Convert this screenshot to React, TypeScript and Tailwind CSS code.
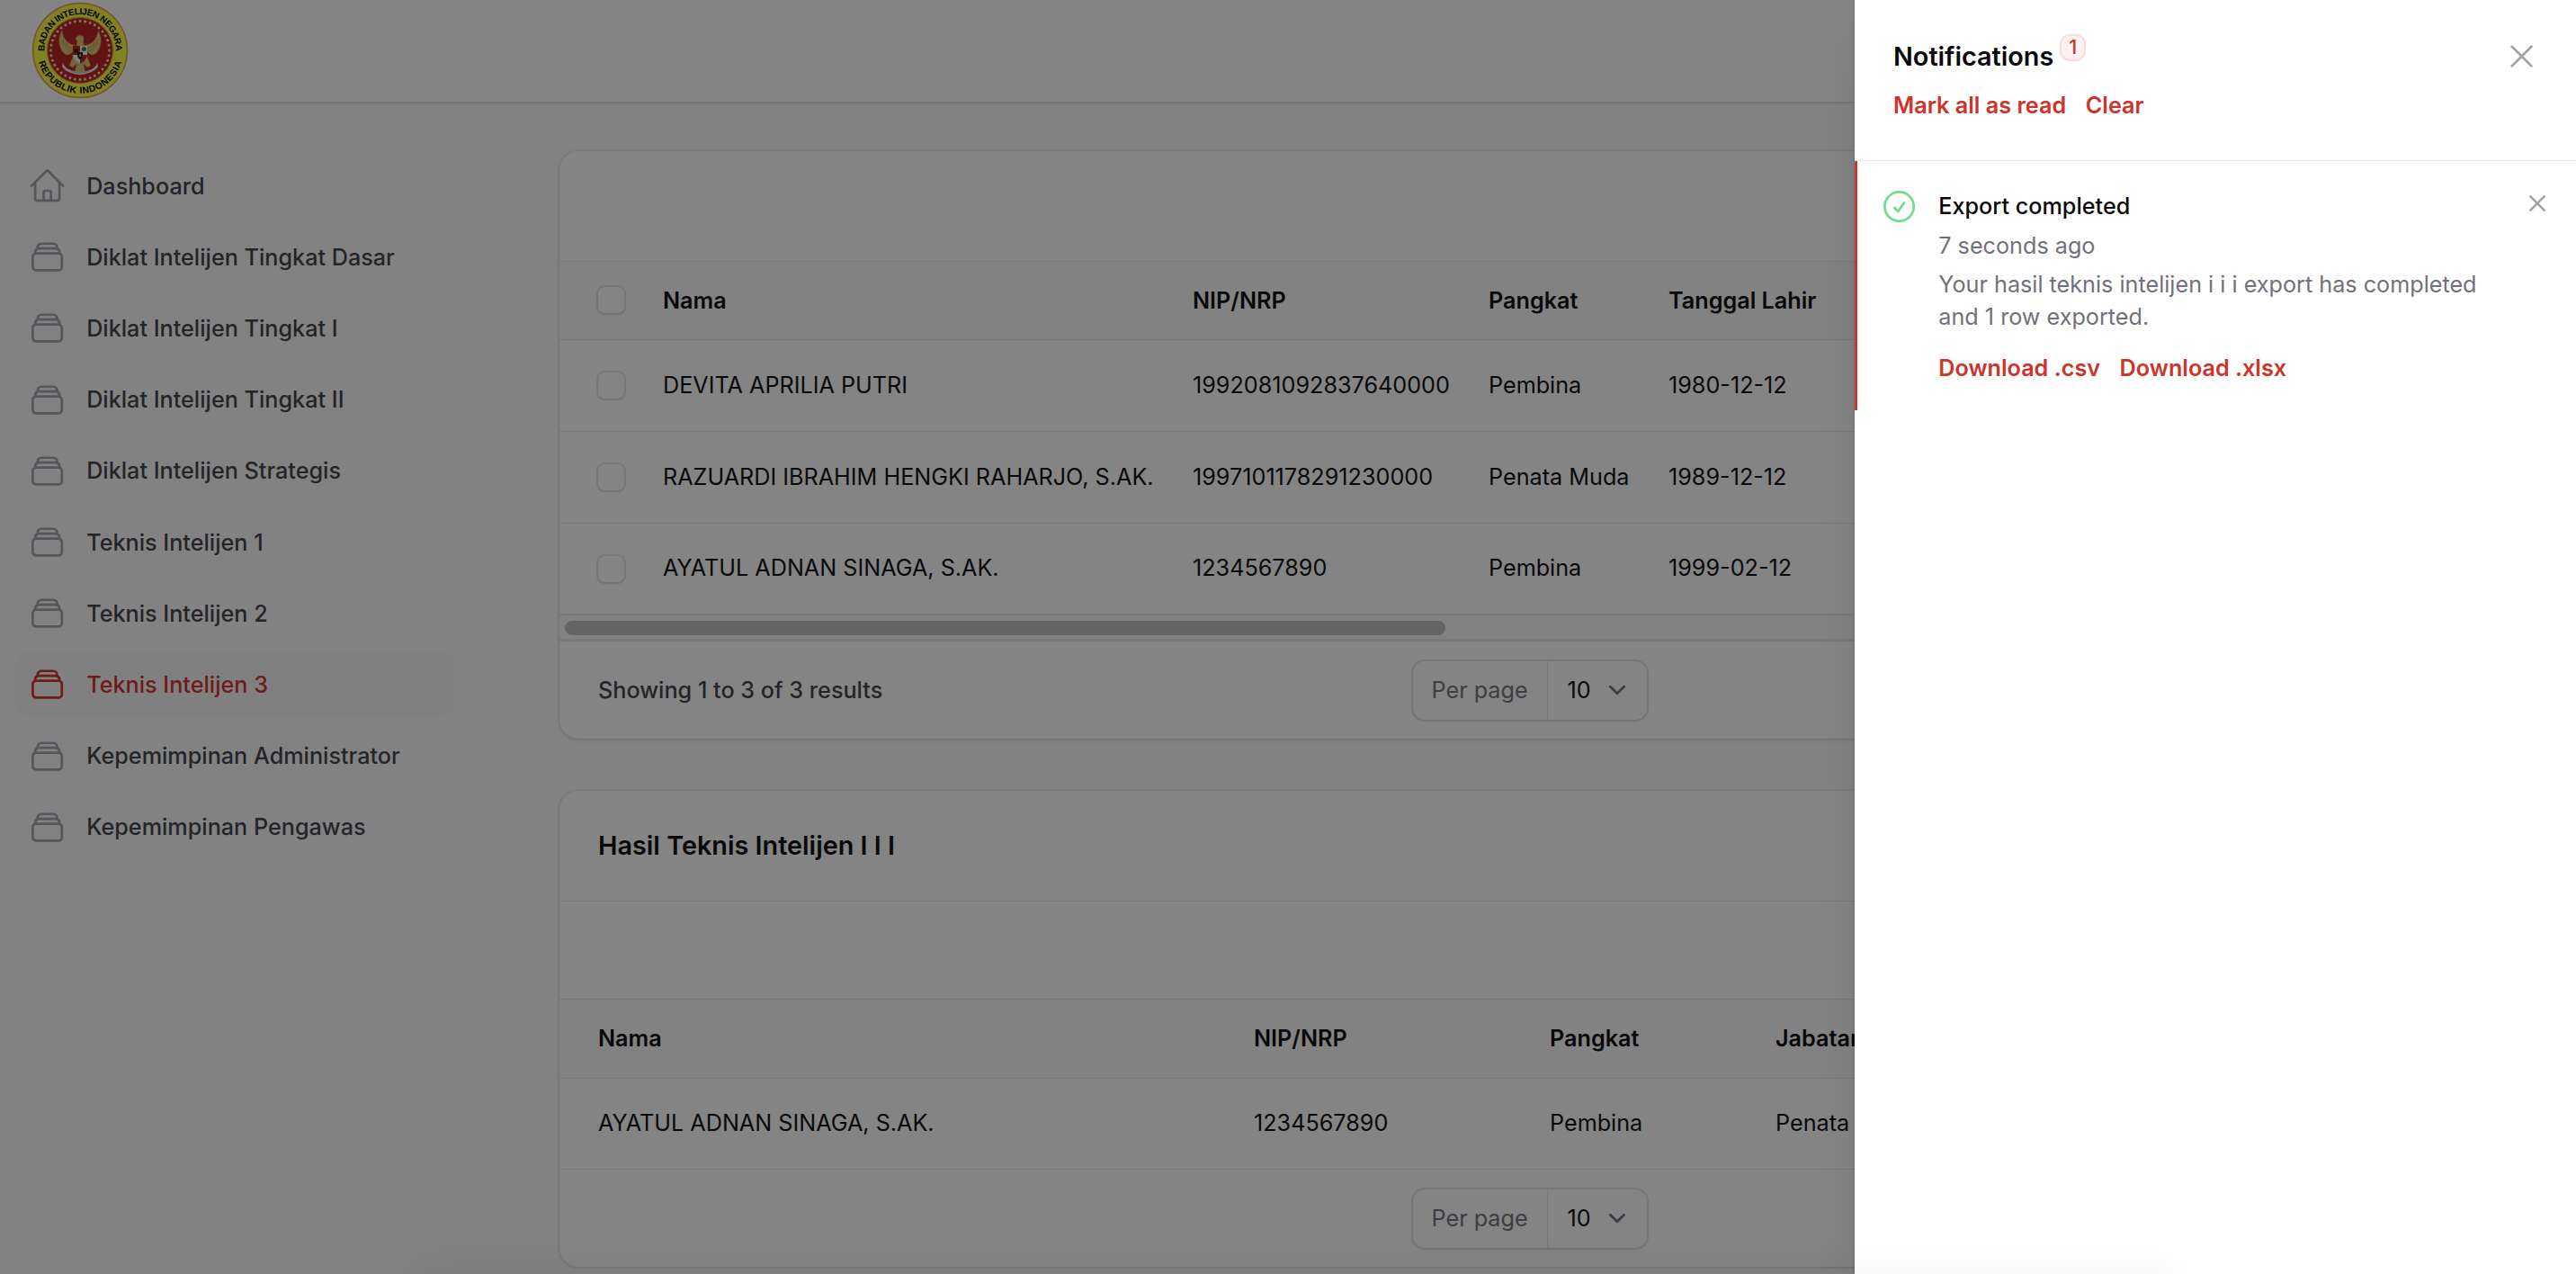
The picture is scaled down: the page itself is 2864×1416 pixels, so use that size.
import {
  HiOutlineCheckCircle,
  HiOutlineHome,
  HiOutlineRectangleStack,
  HiOutlineXMark,
} from "react-icons/hi2";

const navItems = [
  "Dashboard",
  "Diklat Intelijen Tingkat Dasar",
  "Diklat Intelijen Tingkat I",
  "Diklat Intelijen Tingkat II",
  "Diklat Intelijen Strategis",
  "Teknis Intelijen 1",
  "Teknis Intelijen 2",
  "Teknis Intelijen 3",
  "Kepemimpinan Administrator",
  "Kepemimpinan Pengawas",
];

const candidates = [
  ["DEVITA APRILIA PUTRI", "1992081092837640000", "Pembina", "1980-12-12"],
  ["RAZUARDI IBRAHIM HENGKI RAHARJO, S.AK.", "1997101178291230000", "Penata Muda", "1989-12-12"],
  ["AYATUL ADNAN SINAGA, S.AK.", "1234567890", "Pembina", "1999-02-12"],
];

const STAR = "M0-2.3L.6-.75 2.2-.7 .95.3 1.4 1.9 0 1-1.4 1.9-.95.3-2.2-.7-.6-.75Z";

function Seal() {
  const stars = Array.from({ length: 36 }, (_, i) => i * 10);
  return (
    <svg viewBox="-54 -54 108 108" className="h-[108px] w-[108px]">
      <defs>
        <path id="seal-top" d="M-39.6 2.5A39.7 39.7 0 1 1 39.6 2.5" />
        <path id="seal-bottom" d="M-46.8 10.5A48 48 0 0 0 46.8 10.5" />
      </defs>
      <circle r="52.4" fill="#fbf83c" stroke="#e6a544" strokeWidth="1.8" />
      <circle r="36.6" fill="#b91a17" stroke="#d9a637" strokeWidth="1.2" />
      {stars.map((a) => (
        <path key={a} d={STAR} fill="#f3e9ea" transform={`rotate(${a}) translate(0 -32.6)`} />
      ))}
      <g fill="#dcbf6f" stroke="#9d7f35" strokeWidth=".5">
        <path d="M-6-2C-9 4-14 8-19 2-24-4-25-15-20-22-19-14-15-9-10-7L-6-6Z" />
        <path d="M6-2C9 4 14 8 19 2 24-4 25-15 20-22 19-14 15-9 10-7L6-6Z" />
        <path d="M-4-6C-3-9-3-11-5-13-4-17 1-18 4-15L4-11C3-9 4-8 5-6L8-2 8 8-8 8-8-2Z" />
        <path d="M-8 7L-12 17-8 19-4 15-6 25 0 27 6 25 4 15 8 19 12 17 8 7Z" />
      </g>
      <path d="M-19-12Q-18-2-10 1M-16-9Q-14-3-8-1M19-12Q18-2 10 1M16-9Q14-3 8-1" fill="none" stroke="#a98b42" strokeWidth=".8" />
      <path d="M-19 14Q-17 20-10 22 0 26 10 22 17 20 19 14L20 18Q17 23 10 25 0 29-10 25-17 23-20 18Z" fill="#eee8ec" />
      <path d="M-10 23Q0 27 10 23" fill="none" stroke="#555" strokeWidth=".7" strokeDasharray="1 .8" />
      <path d="M-8-5H0V5H-8Z" fill="#c4161c" />
      <path d="M0-5H8V5H0Z" fill="#f2f2ee" />
      <path d="M-8 5H0V15Q-7 12-8 5Z" fill="#f2f2ee" />
      <path d="M0 5H8Q7 12 0 15Z" fill="#c4161c" />
      <circle cx="4.4" cy="-1.6" r="2.5" fill="#1c7c3a" />
      <path d="M-6-2l3 1 1 3-3 1-2-2Z" fill="#111" />
      <path d="M-3 2H3V6Q2 9 0 10-2 9-3 6Z" fill="#111" />
      <circle cy="5.6" r="1.3" fill="#e5c33b" />
      <text className="text-[10px] font-bold" fontFamily="Liberation Sans, Arial, sans-serif" fill="#000">
        <textPath href="#seal-top" startOffset="50%" textAnchor="middle" textLength="127">
          BADAN INTELIJEN NEGARA
        </textPath>
      </text>
      <text className="text-[10.4px] font-bold" fontFamily="Liberation Sans, Arial, sans-serif" fill="#000">
        <textPath href="#seal-bottom" startOffset="50%" textAnchor="middle" textLength="124">
          REPUBLIK INDONESIA
        </textPath>
      </text>
    </svg>
  );
}

function Checkbox() {
  return (
    <span className="block h-[29px] w-[29px] rounded-[7px] bg-white shadow-[0_0_0_1.8px_rgba(9,9,11,0.1),0_2px_4px_rgba(0,0,0,0.06)]" />
  );
}

function PerPage() {
  return (
    <div className="flex h-[65px] w-[260px] rounded-[13px] bg-white shadow-[0_0_0_2px_rgba(9,9,11,0.1),0_2px_4px_rgba(0,0,0,0.06)]">
      <div className="flex w-[150px] items-center border-r border-gray-200 pl-[21px] text-[#71717a]">Per page</div>
      <div className="flex flex-1 items-center justify-between pl-[22px] pr-[14px]">
        <span>10</span>
        <svg viewBox="0 0 20 20" className="h-[38px] w-[38px]" fill="none" stroke="#6b7280" strokeWidth="1.5" strokeLinecap="round" strokeLinejoin="round">
          <path d="M6 8l4 4 4-4" />
        </svg>
      </div>
    </div>
  );
}

const card =
  "w-[2157px] overflow-hidden rounded-[21px] bg-white shadow-[0_0_0_1.8px_rgba(9,9,11,0.05),0_2px_4px_rgba(0,0,0,0.08)]";
const cols1 = "grid grid-cols-[72px_589px_329px_200px_1fr] items-center pl-[43px]";
const cols2 = "grid grid-cols-[729px_329px_251px_1fr] items-center pl-[43px]";

export default function App() {
  return (
    <div className="relative h-[1416px] w-[2864px] overflow-hidden bg-[#fafafa] font-['Inter',sans-serif] text-[25.2px] leading-[36px] text-[#09090b]">
      <header className="flex h-[113px] items-start bg-white pl-[34.5px] pt-[1.5px] shadow-[0_0_0_1.8px_rgba(9,9,11,0.05),0_2px_4px_rgba(0,0,0,0.06)]">
        <Seal />
      </header>
      <div className="flex">
        <nav className="flex w-[622px] shrink-0 flex-col gap-[7.2px] pl-[17px] pt-[57.7px] font-medium text-[#3f3f46]">
          {navItems.map((label, i) => {
            const Icon = i === 0 ? HiOutlineHome : HiOutlineRectangleStack;
            const active = i === 7;
            return (
              <a
                key={label}
                className={
                  active
                    ? "flex h-[72px] w-[488px] items-center gap-[21.6px] rounded-[14.4px] bg-[#f7f7f7] pl-[14.4px] text-[#d02f28]"
                    : "flex h-[72px] w-[488px] items-center gap-[21.6px] rounded-[14.4px] pl-[14.4px]"
                }
              >
                <Icon className={active ? "h-[43.2px] w-[43.2px]" : "h-[43.2px] w-[43.2px] text-[#a1a1aa]"} />
                <span>{label}</span>
              </a>
            );
          })}
        </nav>

        <main className="flex shrink-0 flex-col gap-[58px] pt-[55px]">
          <section className={card}>
            <div className="h-[123px] border-b border-gray-200" />
            <div className={`${cols1} h-[87px] border-b border-gray-200 bg-[#fafafa] pb-px font-semibold`}>
              <Checkbox />
              <span>Nama</span>
              <span>NIP/NRP</span>
              <span>Pangkat</span>
              <span>Tanggal Lahir</span>
            </div>
            {candidates.map((row) => (
              <div key={row[0]} className={`${cols1} h-[102px] border-b border-gray-200 last-of-type:h-[101px]`}>
                <Checkbox />
                {row.map((cell) => (
                  <span key={cell} className="pb-[2px]">{cell}</span>
                ))}
              </div>
            ))}
            <footer>
              <div className="flex h-[28px] items-center border-y border-[#ededed] bg-[#fafafa] pl-[6px] pt-px">
                <div className="h-[16px] w-[979px] rounded-full bg-[#c1c1c1]" />
              </div>
              <div className="grid h-[110px] grid-cols-[1fr_auto_1fr] items-center border-t-2 border-gray-200 px-[43px]">
                <span className="font-medium text-[#3f3f46]">Showing 1 to 3 of 3 results</span>
                <PerPage />
                <span />
              </div>
            </footer>
          </section>

          <section className={card}>
            <div className="flex h-[123px] items-center border-b border-gray-200 pl-[43px] text-[28.8px] font-semibold">
              Hasil Teknis Intelijen I I I
            </div>
            <div className="h-[109px] border-b border-gray-200" />
            <div className={`${cols2} h-[88px] border-b border-gray-200 bg-[#fafafa] pb-[2px] font-semibold`}>
              <span>Nama</span>
              <span>NIP/NRP</span>
              <span>Pangkat</span>
              <span>Jabatan</span>
            </div>
            <div className={`${cols2} h-[101px] border-b border-gray-200 pb-[2px]`}>
              <span>AYATUL ADNAN SINAGA, S.AK.</span>
              <span>1234567890</span>
              <span>Pembina</span>
              <span>Penata Muda</span>
            </div>
            <div className="flex h-[108px] items-center justify-center">
              <PerPage />
            </div>
          </section>
        </main>
      </div>

      <div className="absolute inset-0 bg-[#09090b]/50" />

      <aside className="absolute inset-y-0 right-0 flex w-[802px] flex-col bg-white shadow-[0_36px_45px_-9px_rgba(0,0,0,0.1),0_14px_18px_-11px_rgba(0,0,0,0.1),0_0_0_1.8px_rgba(9,9,11,0.05)]">
        <div className="flex h-[179px] justify-between border-b border-gray-200 pl-[43px] pr-[39px]">
          <div className="pt-[45px]">
            <div className="flex">
              <h2 className="text-[28.8px] font-semibold">Notifications</h2>
              <span className="-mt-[5px] ml-[9px] flex h-[26px] w-[25px] items-center justify-center rounded-[9px] bg-[#fdf2f1] text-[21.6px] font-medium leading-none text-[#cb352c] shadow-[0_0_0_2px_#f8dcda]">
                1
              </span>
            </div>
            <div className="mt-[18px] flex gap-[21.6px] font-semibold text-[#cb352c]">
              <a>Mark all as read</a>
              <a>Clear</a>
            </div>
          </div>
          <HiOutlineXMark className="mt-[41px] h-[43.2px] w-[43.2px] text-[#a1a1aa]" />
        </div>
        <div className="flex h-[277px] border-l-[3px] border-[#cb352c] pl-[24.5px] pt-[29px]">
          <HiOutlineCheckCircle className="h-[43.2px] w-[43.2px] shrink-0 text-[#73dc8c]" />
          <div className="ml-[22.6px] flex-1 text-[#71717a]">
            <h3 className="mt-[3px] font-medium text-[#09090b]">Export completed</h3>
            <p className="mt-[8px]">7 seconds ago</p>
            <p className="mt-[7px] w-[620px]">Your hasil teknis intelijen i i i export has completed and 1 row exported.</p>
            <div className="mt-[21px] flex gap-[21.6px] font-semibold text-[#cb352c]">
              <a>Download .csv</a>
              <a>Download .xlsx</a>
            </div>
          </div>
          <svg viewBox="0 0 20 20" className="mr-[25px] h-[36px] w-[36px] text-[#a1a1aa]" fill="none" stroke="currentColor" strokeWidth="1.5" strokeLinecap="round">
            <path d="M5.75 5.75l8.5 8.5M14.25 5.75l-8.5 8.5" />
          </svg>
        </div>
      </aside>

      <div className="absolute left-[460px] top-[1416px] h-10 w-[1960px] shadow-[0_0_50px_rgba(0,0,0,0.06)]" />
    </div>
  );
}
